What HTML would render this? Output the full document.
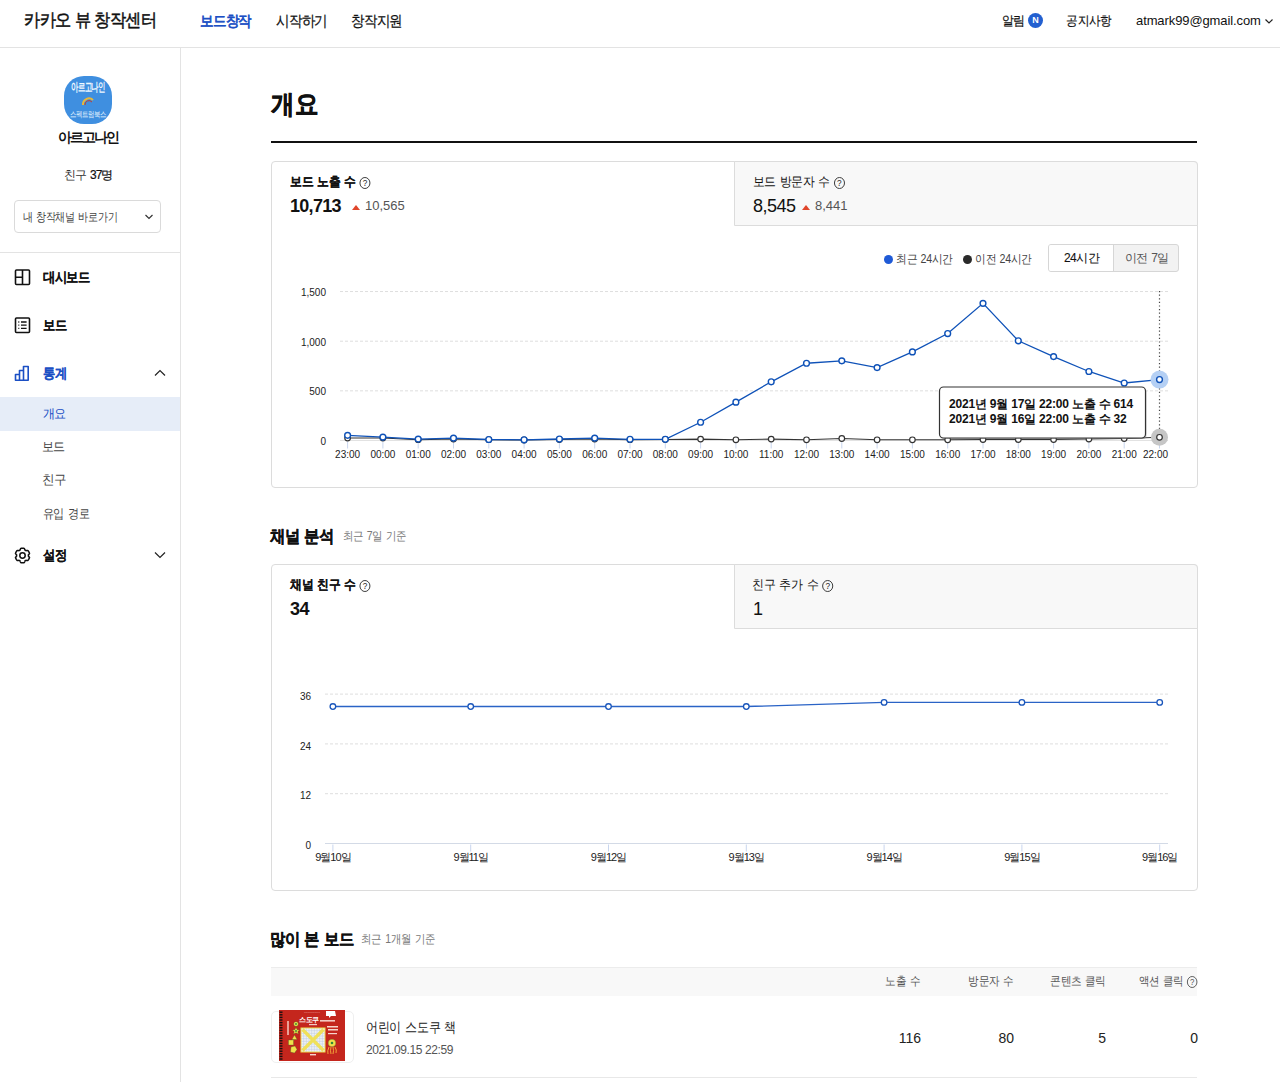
<!DOCTYPE html>
<html lang="ko"><head><meta charset="utf-8">
<style>
*{margin:0;padding:0;box-sizing:border-box}
html,body{width:1280px;height:1082px;overflow:hidden;background:#fff}
body{font-family:"Liberation Sans",sans-serif;color:#111;position:relative;word-spacing:2px}
.a{position:absolute;white-space:nowrap}
#hdr{position:absolute;left:0;top:0;width:1280px;height:48px;border-bottom:1px solid #e3e3e3;background:#fff}
#side{position:absolute;left:0;top:48px;width:181px;height:1034px;border-right:1px solid #e3e3e3}
.card{position:absolute;border:1px solid #dcdcdc;border-radius:4px;background:#fff}
.tab2{position:absolute;background:#f8f8f8;border-left:1px solid #dcdcdc;border-bottom:1px solid #dcdcdc;border-top-right-radius:4px}
.q{display:inline-block;width:12px;height:12px;border:1px solid #333;border-radius:50%;font-size:9px;line-height:10px;text-align:center;vertical-align:0px;margin-left:4px;color:#222;font-weight:normal;-webkit-text-stroke:0}
.lbl{font-size:12.5px;line-height:16px;color:#111}
.lbl b,.bk{-webkit-text-stroke:0.15px currentColor}
.tri{display:inline-block;width:0;height:0;border-left:4px solid transparent;border-right:4px solid transparent;border-bottom:5px solid #e0462b}
</style>
<style id="fit">#f_alim{transform:translateX(-0.40px) scaleX(0.9171);transform-origin:0 0}#f_notice{transform:translateX(-0.72px) scaleX(0.8904);transform-origin:0 0}#f_sel{transform:translateX(-0.40px) scaleX(0.8378);transform-origin:0 0}#f_s1{transform:translateX(-0.48px) scaleX(0.9319);transform-origin:0 0}#f_s2{transform:translateX(-1.28px) scaleX(0.9261);transform-origin:0 0}#f_s3{transform:translateX(-1.28px) scaleX(0.9682);transform-origin:0 0}#f_s4{transform:translateX(-0.48px) scaleX(0.8543);transform-origin:0 0}#f_l1{transform:translateX(0.40px) scaleX(0.9091);transform-origin:0 0}#f_l2{transform:translateX(-0.16px) scaleX(0.9120);transform-origin:0 0}#f_l3{transform:translateX(0.40px) scaleX(0.9091);transform-origin:0 0}#f_l4{transform:translateX(-0.80px) scaleX(0.9207);transform-origin:0 0}#f_lg1{transform:translateX(-0.80px) scaleX(0.8892);transform-origin:0 0}#f_lg2{transform:translateX(-0.80px) scaleX(0.8892);transform-origin:0 0}#f_sub1{transform:translateX(-0.24px) scaleX(0.8719);transform-origin:0 0}#f_sub2{transform:translateX(-0.72px) scaleX(0.8695);transform-origin:0 0}#f_h1{transform:translateX(1.04px) scaleX(0.8845);transform-origin:100% 0}#f_h2{transform:translateX(1.00px) scaleX(0.8800);transform-origin:100% 0}#f_h3{transform:translateX(1.52px) scaleX(0.8843);transform-origin:100% 0}#f_h4{transform:translateX(0.40px) scaleX(0.8725);transform-origin:100% 0}#f_t1{transform:translateX(-0.16px) scaleX(0.8589);transform-origin:0 0}</style></head><body>

<div id="hdr">
  <div class="a" style="left:24px;top:9px;font-size:18px;line-height:22px;color:#111;-webkit-text-stroke:0.5px #111;letter-spacing:-0.7px;word-spacing:0;transform:scaleX(0.9);transform-origin:0 0">카카오 뷰 창작센터</div>
  <div class="a" style="left:200px;top:11px;font-size:15px;line-height:19px;-webkit-text-stroke:0.75px currentColor;color:#1b4fc4;letter-spacing:-0.8px;transform:scaleX(0.9);transform-origin:0 0">보드창작</div>
  <div class="a" style="left:276px;top:11px;font-size:15px;line-height:19px;color:#111;-webkit-text-stroke:0.25px #111;letter-spacing:-0.8px;transform:scaleX(0.9);transform-origin:0 0">시작하기</div>
  <div class="a" style="left:351px;top:11px;font-size:15px;line-height:19px;color:#111;-webkit-text-stroke:0.25px #111;letter-spacing:-0.8px;transform:scaleX(0.9);transform-origin:0 0">창작지원</div>
  <div id="f_alim" class="a" style="left:1002px;top:12px;font-size:13px;line-height:17px;color:#111;letter-spacing:-0.3px;-webkit-text-stroke:0.2px #111">알림</div>
  <div class="a" style="left:1028px;top:13px;width:15px;height:15px;border-radius:50%;background:#2360d0;color:#fff;font-size:9px;line-height:15px;text-align:center;font-weight:bold">N</div>
  <div id="f_notice" class="a" style="left:1067px;top:12px;font-size:13px;line-height:17px;color:#111;letter-spacing:-0.3px;-webkit-text-stroke:0.2px #111">공지사항</div>
  <div class="a" style="left:1136px;top:12px;font-size:13px;line-height:17px;color:#111;letter-spacing:-0.1px">atmark99@gmail.com</div>
  <svg class="a" style="left:1264px;top:17px" width="10" height="8"><path d="M1.5 2.5 L5 6 L8.5 2.5" fill="none" stroke="#222" stroke-width="1.2"/></svg>
</div>

<div id="side">
  <div class="a" style="left:64px;top:28px;width:48px;height:48px;border-radius:20px;background:#3f8fe0;overflow:hidden">
    <div class="a" style="left:-26px;top:4px;width:100px;text-align:center;font-size:12px;line-height:14px;color:#eef8ff;font-weight:bold;letter-spacing:-0.8px;transform:scaleX(0.62);transform-origin:50px 0">아르고나인</div>
    <svg class="a" style="left:16px;top:20px" width="16" height="10"><path d="M3 9 A6 6 0 0 1 13 4" fill="none" stroke="#e8b83a" stroke-width="2"/><path d="M5 9 A4 4 0 0 1 12 6" fill="none" stroke="#c53a2a" stroke-width="1"/></svg>
    <div class="a" style="left:-26px;top:34px;width:100px;text-align:center;font-size:8px;line-height:9px;color:#e3f3ff;letter-spacing:-0.3px;transform:scaleX(0.8);transform-origin:50px 0">스펙트럼북스</div>
  </div>
  <div class="a" style="left:0;top:81px;width:176px;text-align:center;font-size:13.5px;line-height:18px;font-weight:bold;color:#111;letter-spacing:-2px">아르고나인</div>
  <div class="a" style="left:0;top:119px;width:176px;text-align:center;font-size:12px;line-height:16px;color:#333;letter-spacing:-1px">친구 <span style="color:#111;-webkit-text-stroke:0.2px #111">37명</span></div>
  <div class="a" style="left:14px;top:152px;width:147px;height:33px;border:1px solid #dadada;border-radius:4px">
    <div id="f_sel" class="a" style="left:8px;top:8px;font-size:12px;line-height:16px;color:#444;letter-spacing:-0.3px;word-spacing:1px">내 창작채널 바로가기</div>
    <svg class="a" style="left:129px;top:12px" width="10" height="8"><path d="M1.5 2 L5 5.5 L8.5 2" fill="none" stroke="#333" stroke-width="1.2"/></svg>
  </div>
  <div class="a" style="left:0;top:204px;width:180px;height:1px;background:#e3e3e3"></div>

  <!-- dashboard -->
  <svg class="a" style="left:14px;top:221px" width="17" height="17"><rect x="1.5" y="1" width="14" height="14.5" rx="1" fill="none" stroke="#111" stroke-width="1.6"/><path d="M8.5 1 V15.5 M1.5 8.3 H8.5" stroke="#111" stroke-width="1.6"/></svg>
  <div class="a" style="left:43px;top:220px;font-size:14px;line-height:18px;font-weight:bold;-webkit-text-stroke:0.05px currentColor;color:#111;letter-spacing:-0.9px;transform:scaleX(0.88);transform-origin:0 0">대시보드</div>
  <!-- board -->
  <svg class="a" style="left:14px;top:269px" width="17" height="17"><rect x="1.5" y="1" width="14" height="14.5" rx="1" fill="none" stroke="#111" stroke-width="1.6"/><path d="M4.3 5 H5.3 M7 5 H12.6 M4.3 8.2 H5.3 M7 8.2 H12.6 M4.3 11.4 H5.3 M7 11.4 H12.6" stroke="#111" stroke-width="1.3"/></svg>
  <div class="a" style="left:43px;top:268px;font-size:14px;line-height:18px;font-weight:bold;-webkit-text-stroke:0.05px currentColor;color:#111;letter-spacing:-0.9px;transform:scaleX(0.88);transform-origin:0 0">보드</div>
  <!-- stats -->
  <svg class="a" style="left:14px;top:317px" width="17" height="17"><path d="M1.5 15.2 V9.5 H5.5 V15.2 Z M5.5 15.2 V5.5 H9.5 V15.2 Z M9.5 15.2 V1.5 H14.2 V15.2 Z" fill="none" stroke="#1b4fc4" stroke-width="1.6" stroke-linejoin="round"/></svg>
  <div class="a" style="left:43px;top:316px;font-size:14px;line-height:18px;font-weight:bold;-webkit-text-stroke:0.05px currentColor;color:#1b4fc4;letter-spacing:-0.9px;transform:scaleX(0.88);transform-origin:0 0">통계</div>
  <svg class="a" style="left:153px;top:320px" width="14" height="10"><path d="M2 7.5 L7 2.5 L12 7.5" fill="none" stroke="#222" stroke-width="1.2"/></svg>
  <div class="a" style="left:0;top:349px;width:180px;height:34px;background:#e6edf8"></div>
  <div id="f_s1" class="a" style="left:43px;top:357px;font-size:13px;line-height:17px;color:#1b4fc4;letter-spacing:-0.3px">개요</div>
  <div id="f_s2" class="a" style="left:43px;top:390px;font-size:13px;line-height:17px;color:#444;letter-spacing:-0.3px">보드</div>
  <div id="f_s3" class="a" style="left:43px;top:423px;font-size:13px;line-height:17px;color:#444;letter-spacing:-0.3px">친구</div>
  <div id="f_s4" class="a" style="left:43px;top:457px;font-size:13px;line-height:17px;color:#444;letter-spacing:-0.3px;word-spacing:1px">유입 경로</div>
  <!-- settings -->
  <svg class="a" style="left:13px;top:498px" width="19" height="19"><polygon points="9.50,2.20 9.63,2.20 9.75,2.20 9.88,2.21 10.01,2.22 10.14,2.23 10.26,2.24 10.39,2.25 10.52,2.27 10.64,2.29 10.77,2.31 10.89,2.33 11.02,2.36 11.14,2.39 11.27,2.42 11.35,2.58 11.43,2.75 11.51,2.92 11.58,3.09 11.65,3.26 11.71,3.43 11.76,3.60 11.82,3.77 11.86,3.94 11.90,4.11 11.99,4.15 12.09,4.20 12.18,4.24 12.27,4.29 12.36,4.34 12.45,4.39 12.54,4.44 12.63,4.50 12.71,4.55 12.80,4.61 12.88,4.67 12.97,4.73 13.13,4.68 13.30,4.63 13.48,4.59 13.65,4.55 13.83,4.52 14.01,4.49 14.19,4.47 14.38,4.45 14.56,4.44 14.75,4.43 14.84,4.52 14.92,4.62 15.01,4.71 15.09,4.81 15.17,4.91 15.25,5.01 15.33,5.11 15.41,5.21 15.48,5.31 15.55,5.42 15.62,5.52 15.69,5.63 15.76,5.74 15.82,5.85 15.88,5.96 15.95,6.07 16.00,6.19 16.06,6.30 16.12,6.41 16.17,6.53 16.22,6.65 16.27,6.77 16.32,6.88 16.36,7.00 16.40,7.12 16.44,7.24 16.48,7.37 16.52,7.49 16.42,7.65 16.31,7.80 16.20,7.95 16.09,8.10 15.98,8.24 15.86,8.38 15.74,8.51 15.62,8.64 15.49,8.76 15.37,8.88 15.38,8.99 15.39,9.09 15.39,9.19 15.40,9.29 15.40,9.40 15.40,9.50 15.40,9.60 15.40,9.71 15.39,9.81 15.39,9.91 15.38,10.01 15.37,10.12 15.49,10.24 15.62,10.36 15.74,10.49 15.86,10.62 15.98,10.76 16.09,10.90 16.20,11.05 16.31,11.20 16.42,11.35 16.52,11.51 16.48,11.63 16.44,11.76 16.40,11.88 16.36,12.00 16.32,12.12 16.27,12.23 16.22,12.35 16.17,12.47 16.12,12.59 16.06,12.70 16.00,12.81 15.95,12.93 15.88,13.04 15.82,13.15 15.76,13.26 15.69,13.37 15.62,13.48 15.55,13.58 15.48,13.69 15.41,13.79 15.33,13.89 15.25,13.99 15.17,14.09 15.09,14.19 15.01,14.29 14.92,14.38 14.84,14.48 14.75,14.57 14.56,14.56 14.38,14.55 14.19,14.53 14.01,14.51 13.83,14.48 13.65,14.45 13.48,14.41 13.30,14.37 13.13,14.32 12.97,14.27 12.88,14.33 12.80,14.39 12.71,14.45 12.63,14.50 12.54,14.56 12.45,14.61 12.36,14.66 12.27,14.71 12.18,14.76 12.09,14.80 11.99,14.85 11.90,14.89 11.86,15.06 11.82,15.23 11.76,15.40 11.71,15.57 11.65,15.74 11.58,15.91 11.51,16.08 11.43,16.25 11.35,16.42 11.27,16.58 11.14,16.61 11.02,16.64 10.89,16.67 10.77,16.69 10.64,16.71 10.52,16.73 10.39,16.75 10.26,16.76 10.14,16.77 10.01,16.78 9.88,16.79 9.75,16.80 9.63,16.80 9.50,16.80 9.37,16.80 9.25,16.80 9.12,16.79 8.99,16.78 8.86,16.77 8.74,16.76 8.61,16.75 8.48,16.73 8.36,16.71 8.23,16.69 8.11,16.67 7.98,16.64 7.86,16.61 7.73,16.58 7.65,16.42 7.57,16.25 7.49,16.08 7.42,15.91 7.35,15.74 7.29,15.57 7.24,15.40 7.18,15.23 7.14,15.06 7.10,14.89 7.01,14.85 6.91,14.80 6.82,14.76 6.73,14.71 6.64,14.66 6.55,14.61 6.46,14.56 6.37,14.50 6.29,14.45 6.20,14.39 6.12,14.33 6.03,14.27 5.87,14.32 5.70,14.37 5.52,14.41 5.35,14.45 5.17,14.48 4.99,14.51 4.81,14.53 4.62,14.55 4.44,14.56 4.25,14.57 4.16,14.48 4.08,14.38 3.99,14.29 3.91,14.19 3.83,14.09 3.75,13.99 3.67,13.89 3.59,13.79 3.52,13.69 3.45,13.58 3.38,13.48 3.31,13.37 3.24,13.26 3.18,13.15 3.12,13.04 3.05,12.93 3.00,12.81 2.94,12.70 2.88,12.59 2.83,12.47 2.78,12.35 2.73,12.23 2.68,12.12 2.64,12.00 2.60,11.88 2.56,11.76 2.52,11.63 2.48,11.51 2.58,11.35 2.69,11.20 2.80,11.05 2.91,10.90 3.02,10.76 3.14,10.62 3.26,10.49 3.38,10.36 3.51,10.24 3.63,10.12 3.62,10.01 3.61,9.91 3.61,9.81 3.60,9.71 3.60,9.60 3.60,9.50 3.60,9.40 3.60,9.29 3.61,9.19 3.61,9.09 3.62,8.99 3.63,8.88 3.51,8.76 3.38,8.64 3.26,8.51 3.14,8.38 3.02,8.24 2.91,8.10 2.80,7.95 2.69,7.80 2.58,7.65 2.48,7.49 2.52,7.37 2.56,7.24 2.60,7.12 2.64,7.00 2.68,6.88 2.73,6.77 2.78,6.65 2.83,6.53 2.88,6.41 2.94,6.30 3.00,6.19 3.05,6.07 3.12,5.96 3.18,5.85 3.24,5.74 3.31,5.63 3.38,5.52 3.45,5.42 3.52,5.31 3.59,5.21 3.67,5.11 3.75,5.01 3.83,4.91 3.91,4.81 3.99,4.71 4.08,4.62 4.16,4.52 4.25,4.43 4.44,4.44 4.62,4.45 4.81,4.47 4.99,4.49 5.17,4.52 5.35,4.55 5.52,4.59 5.70,4.63 5.87,4.68 6.03,4.73 6.12,4.67 6.20,4.61 6.29,4.55 6.37,4.50 6.46,4.44 6.55,4.39 6.64,4.34 6.73,4.29 6.82,4.24 6.91,4.20 7.01,4.15 7.10,4.11 7.14,3.94 7.18,3.77 7.24,3.60 7.29,3.43 7.35,3.26 7.42,3.09 7.49,2.92 7.57,2.75 7.65,2.58 7.73,2.42 7.86,2.39 7.98,2.36 8.11,2.33 8.23,2.31 8.36,2.29 8.48,2.27 8.61,2.25 8.74,2.24 8.86,2.23 8.99,2.22 9.12,2.21 9.25,2.20 9.37,2.20" fill="none" stroke="#111" stroke-width="1.5" stroke-linejoin="round"/><circle cx="9.5" cy="9.5" r="2.7" fill="none" stroke="#111" stroke-width="1.5"/></svg>
  <div class="a" style="left:43px;top:498px;font-size:14px;line-height:18px;font-weight:bold;-webkit-text-stroke:0.05px currentColor;color:#111;letter-spacing:-0.9px;transform:scaleX(0.88);transform-origin:0 0">설정</div>
  <svg class="a" style="left:153px;top:502px" width="14" height="10"><path d="M2 2.5 L7 7.5 L12 2.5" fill="none" stroke="#222" stroke-width="1.2"/></svg>
</div>

<div id="main">
  <div class="a" style="left:271px;top:88px;font-size:26px;line-height:32px;font-weight:bold;-webkit-text-stroke:0.6px currentColor;color:#111;letter-spacing:0.5px;transform:scaleX(0.9);transform-origin:0 0">개요</div>
  <div class="a" style="left:271px;top:141px;width:926px;height:2px;background:#111"></div>

  <!-- card 1 -->
  <div class="card" style="left:271px;top:161px;width:927px;height:327px">
    <div class="tab2" style="left:462px;top:-1px;width:464px;height:65px;border-top:1px solid #dcdcdc;border-right:1px solid #dcdcdc"></div>
  </div>
  <div id="f_l1" class="a lbl" style="left:290px;top:174px;font-weight:bold;letter-spacing:-0.3px;word-spacing:1px"><span class="bk">보드 노출 수</span><span class="q">?</span></div>
  <div class="a" style="left:290px;top:196px;font-size:18px;line-height:21px;font-weight:bold;color:#111;letter-spacing:-0.7px">10,713</div>
  <div class="a tri" style="left:352px;top:205px"></div>
  <div class="a" style="left:365px;top:198px;font-size:13px;line-height:16px;color:#555">10,565</div>

  <div id="f_l2" class="a lbl" style="left:753px;top:174px;letter-spacing:-0.3px;word-spacing:1px">보드 방문자 수<span class="q">?</span></div>
  <div class="a" style="left:753px;top:196px;font-size:18px;line-height:21px;color:#111;letter-spacing:-0.5px">8,545</div>
  <div class="a tri" style="left:802px;top:205px"></div>
  <div class="a" style="left:815px;top:198px;font-size:13px;line-height:16px;color:#555">8,441</div>

  <!-- legend -->
  <div class="a" style="left:884px;top:255px;width:9px;height:9px;border-radius:50%;background:#1f5ad6"></div>
  <div id="f_lg1" class="a" style="left:897px;top:251px;font-size:12px;line-height:16px;color:#444;letter-spacing:-0.3px;word-spacing:1px">최근 24시간</div>
  <div class="a" style="left:963px;top:255px;width:9px;height:9px;border-radius:50%;background:#2a2a2a"></div>
  <div id="f_lg2" class="a" style="left:976px;top:251px;font-size:12px;line-height:16px;color:#444;letter-spacing:-0.3px;word-spacing:1px">이전 24시간</div>
  <!-- toggle -->
  <div class="a" style="left:1048px;top:244px;width:131px;height:28px;border:1px solid #d6d6d6;border-radius:3px;background:#f2f2f2;overflow:hidden">
    <div class="a" style="left:0;top:0;width:65px;height:26px;background:#fff;border-right:1px solid #d6d6d6"></div>
    <div class="a" style="left:0;top:5px;width:65px;text-align:center;font-size:12px;line-height:16px;color:#111;letter-spacing:-0.6px;-webkit-text-stroke:0.1px #111">24시간</div>
    <div class="a" style="left:65px;top:5px;width:65px;text-align:center;font-size:12px;line-height:16px;color:#555;letter-spacing:-1px">이전 7일</div>
  </div>

  <!-- card 2 -->
  <div class="a" style="left:270px;top:526px;font-size:17px;line-height:21px;font-weight:bold;-webkit-text-stroke:0.35px currentColor;color:#111;letter-spacing:-0.8px;word-spacing:2px;transform:scaleX(0.9);transform-origin:0 0">채널 분석</div>
  <div id="f_sub1" class="a" style="left:343px;top:528px;font-size:12px;line-height:16px;color:#777;letter-spacing:-0.3px;word-spacing:1px">최근 7일 기준</div>
  <div class="card" style="left:271px;top:564px;width:927px;height:327px">
    <div class="tab2" style="left:462px;top:-1px;width:464px;height:65px;border-top:1px solid #dcdcdc;border-right:1px solid #dcdcdc"></div>
  </div>
  <div id="f_l3" class="a lbl" style="left:290px;top:577px;font-weight:bold;letter-spacing:-0.3px;word-spacing:1px"><span class="bk">채널 친구 수</span><span class="q">?</span></div>
  <div class="a" style="left:290px;top:599px;font-size:18px;line-height:21px;font-weight:bold;color:#111;letter-spacing:-0.5px">34</div>
  <div id="f_l4" class="a lbl" style="left:753px;top:577px;letter-spacing:-0.3px;word-spacing:1px">친구 추가 수<span class="q">?</span></div>
  <div class="a" style="left:753px;top:599px;font-size:18px;line-height:21px;color:#111">1</div>

  <!-- table -->
  <div class="a" style="left:270px;top:929px;font-size:17px;line-height:21px;font-weight:bold;-webkit-text-stroke:0.35px currentColor;color:#111;letter-spacing:-0.8px;word-spacing:2px;transform:scaleX(0.9);transform-origin:0 0">많이 본 보드</div>
  <div id="f_sub2" class="a" style="left:362px;top:931px;font-size:12px;line-height:16px;color:#777;letter-spacing:-0.3px;word-spacing:1px">최근 1개월 기준</div>
  <div class="a" style="left:271px;top:967px;width:926px;height:29px;background:#f8f8f8;border-top:1px solid #ececec"></div>
  <div id="f_h1" class="a" style="left:819px;top:973px;width:100px;text-align:right;font-size:12px;line-height:16px;color:#555;letter-spacing:-0.3px;word-spacing:1px">노출 수</div>
  <div id="f_h2" class="a" style="left:912px;top:973px;width:100px;text-align:right;font-size:12px;line-height:16px;color:#555;letter-spacing:-0.3px;word-spacing:1px">방문자 수</div>
  <div id="f_h3" class="a" style="left:1004px;top:973px;width:100px;text-align:right;font-size:12px;line-height:16px;color:#555;letter-spacing:-0.3px;word-spacing:1px">콘텐츠 클릭</div>
  <div id="f_h4" class="a" style="left:1097px;top:973px;width:100px;text-align:right;font-size:12px;line-height:16px;color:#555;letter-spacing:-0.3px;word-spacing:1px">액션 클릭<span class="q" style="border-color:#555;color:#555">?</span></div>
  <div class="a" style="left:271px;top:1011px;width:83px;height:52px;border:1px solid #efefef;border-radius:5px"></div>
  <svg class="a" style="left:279px;top:1010px" width="66" height="51" viewBox="0 0 66 51">
    <rect x="0" y="0" width="66" height="51" fill="#c4261d"/>
    <g fill="#1a1010"><rect x="0.5" y="1.5" width="3" height="1.4"/><rect x="0.5" y="4.1" width="3" height="1.4"/><rect x="0.5" y="6.7" width="3" height="1.4"/><rect x="0.5" y="9.3" width="3" height="1.4"/><rect x="0.5" y="11.9" width="3" height="1.4"/><rect x="0.5" y="14.5" width="3" height="1.4"/><rect x="0.5" y="17.1" width="3" height="1.4"/><rect x="0.5" y="19.7" width="3" height="1.4"/><rect x="0.5" y="22.3" width="3" height="1.4"/><rect x="0.5" y="24.9" width="3" height="1.4"/><rect x="0.5" y="27.5" width="3" height="1.4"/><rect x="0.5" y="30.1" width="3" height="1.4"/><rect x="0.5" y="32.7" width="3" height="1.4"/><rect x="0.5" y="35.3" width="3" height="1.4"/><rect x="0.5" y="37.9" width="3" height="1.4"/><rect x="0.5" y="40.5" width="3" height="1.4"/><rect x="0.5" y="43.1" width="3" height="1.4"/><rect x="0.5" y="45.7" width="3" height="1.4"/><rect x="0.5" y="48.3" width="3" height="1.4"/></g>
    <text x="33" y="3.5" font-size="3" fill="#f6d9d0" text-anchor="middle" font-family="Liberation Sans, sans-serif">~~~~~~~~~</text>
    
    <text x="30" y="12" font-size="7" font-weight="bold" fill="#fff" text-anchor="middle" letter-spacing="-0.6" font-family="Liberation Sans, sans-serif">스도쿠</text>
    <path d="M47 1 H56 L57 6 L52 6 L50 8 L50 6 L47 6 Z" fill="#fff"/>
    <rect x="41" y="10" width="15" height="1.6" fill="#f3c9c2"/>
    <rect x="30" y="14" width="8" height="1.2" fill="#f3c9c2"/>
    <rect x="22" y="18" width="24" height="24" fill="#eef2f7" stroke="#f0de48" stroke-width="1"/>
    <g stroke="#b7c6dc" stroke-width="0.4"><line x1="24.67" y1="18" x2="24.67" y2="42"/><line x1="22" y1="20.67" x2="46" y2="20.67"/><line x1="27.33" y1="18" x2="27.33" y2="42"/><line x1="22" y1="23.33" x2="46" y2="23.33"/><line x1="30.00" y1="18" x2="30.00" y2="42"/><line x1="22" y1="26.00" x2="46" y2="26.00"/><line x1="32.67" y1="18" x2="32.67" y2="42"/><line x1="22" y1="28.67" x2="46" y2="28.67"/><line x1="35.33" y1="18" x2="35.33" y2="42"/><line x1="22" y1="31.33" x2="46" y2="31.33"/><line x1="38.00" y1="18" x2="38.00" y2="42"/><line x1="22" y1="34.00" x2="46" y2="34.00"/><line x1="40.67" y1="18" x2="40.67" y2="42"/><line x1="22" y1="36.67" x2="46" y2="36.67"/><line x1="43.33" y1="18" x2="43.33" y2="42"/><line x1="22" y1="39.33" x2="46" y2="39.33"/></g>
    <path d="M23.5 19.5 L44.5 40.5 M44.5 19.5 L23.5 40.5" stroke="#f2e14a" stroke-width="3.2" opacity="0.9"/>
    <g fill="#f2e14a" stroke="#2d6a2d" stroke-width="0.3">
      <circle cx="17" cy="14" r="2.3"/>
      <path d="M17 17.5 L18.2 19.8 L20.6 20 L18.8 21.6 L19.4 24 L17 22.7 L14.6 24 L15.2 21.6 L13.4 20 L15.8 19.8 Z"/>
      <path d="M15.5 25 L18 29.5 L13 29.5 Z"/>
      <rect x="9.5" y="30" width="5" height="5"/>
      <path d="M12 37 L16 36 L18 39.5 L15.5 43 L11.5 42 Z"/>
      <circle cx="53" cy="33" r="3.8"/>
    </g>
    <g fill="#2d8a3a"><circle cx="17" cy="14" r="0.9"/><circle cx="17" cy="21" r="0.9"/><circle cx="53" cy="33" r="1.3"/></g>
    <path d="M50 37 Q48 41 49 44 M52 37 Q51 41 52 44 M54 37 Q55 41 54 44 M56 37 Q58 40 57 43" stroke="#f2a33a" stroke-width="1" fill="none"/>
    <g fill="#f6d5cc">
      <rect x="8" y="11" width="2" height="14" opacity="0.7"/>
      <rect x="48" y="16" width="11" height="1.5"/><rect x="49" y="19" width="10" height="1.5"/><rect x="49" y="23" width="9" height="1.2"/>
      <rect x="31" y="44" width="6" height="1.4"/>
    </g>
  </svg>
  <div id="f_t1" class="a" style="left:366px;top:1018px;font-size:14px;line-height:18px;color:#222;letter-spacing:-0.3px;word-spacing:1px">어린이 스도쿠 책</div>
  <div class="a" style="left:366px;top:1042px;font-size:12px;line-height:16px;color:#555;letter-spacing:-0.4px;word-spacing:0">2021.09.15 22:59</div>
  <div class="a" style="left:821px;top:1029px;width:100px;text-align:right;font-size:14px;line-height:18px;color:#222">116</div>
  <div class="a" style="left:914px;top:1029px;width:100px;text-align:right;font-size:14px;line-height:18px;color:#222">80</div>
  <div class="a" style="left:1006px;top:1029px;width:100px;text-align:right;font-size:14px;line-height:18px;color:#222">5</div>
  <div class="a" style="left:1098px;top:1029px;width:100px;text-align:right;font-size:14px;line-height:18px;color:#222">0</div>
  <div class="a" style="left:271px;top:1077px;width:926px;height:1px;background:#e8e8e8"></div>
</div>
<svg id="charts" class="a" style="left:0;top:0;word-spacing:0" width="1280" height="1082"><line x1="340" y1="291.55" x2="1168" y2="291.55" stroke="#dedede" stroke-width="1" stroke-dasharray="3 2"/><line x1="340" y1="341.2" x2="1168" y2="341.2" stroke="#dedede" stroke-width="1" stroke-dasharray="3 2"/><line x1="340" y1="390.85" x2="1168" y2="390.85" stroke="#dedede" stroke-width="1" stroke-dasharray="3 2"/><line x1="340" y1="440.5" x2="1168" y2="440.5" stroke="#e2e2e2" stroke-width="1"/><text x="326" y="296.15000000000003" text-anchor="end" font-size="10" fill="#222" font-family="Liberation Sans, sans-serif">1,500</text><text x="326" y="345.8" text-anchor="end" font-size="10" fill="#222" font-family="Liberation Sans, sans-serif">1,000</text><text x="326" y="395.45000000000005" text-anchor="end" font-size="10" fill="#222" font-family="Liberation Sans, sans-serif">500</text><text x="326" y="445.1" text-anchor="end" font-size="10" fill="#222" font-family="Liberation Sans, sans-serif">0</text><line x1="347.6" y1="441.5" x2="347.6" y2="448.5" stroke="#c9d6ee" stroke-width="1"/><text x="347.60" y="457.5" text-anchor="middle" font-size="10" fill="#222" font-family="Liberation Sans, sans-serif">23:00</text><line x1="382.90000000000003" y1="441.5" x2="382.90000000000003" y2="448.5" stroke="#c9d6ee" stroke-width="1"/><text x="382.90" y="457.5" text-anchor="middle" font-size="10" fill="#222" font-family="Liberation Sans, sans-serif">00:00</text><line x1="418.20000000000005" y1="441.5" x2="418.20000000000005" y2="448.5" stroke="#c9d6ee" stroke-width="1"/><text x="418.20" y="457.5" text-anchor="middle" font-size="10" fill="#222" font-family="Liberation Sans, sans-serif">01:00</text><line x1="453.5" y1="441.5" x2="453.5" y2="448.5" stroke="#c9d6ee" stroke-width="1"/><text x="453.50" y="457.5" text-anchor="middle" font-size="10" fill="#222" font-family="Liberation Sans, sans-serif">02:00</text><line x1="488.8" y1="441.5" x2="488.8" y2="448.5" stroke="#c9d6ee" stroke-width="1"/><text x="488.80" y="457.5" text-anchor="middle" font-size="10" fill="#222" font-family="Liberation Sans, sans-serif">03:00</text><line x1="524.1" y1="441.5" x2="524.1" y2="448.5" stroke="#c9d6ee" stroke-width="1"/><text x="524.10" y="457.5" text-anchor="middle" font-size="10" fill="#222" font-family="Liberation Sans, sans-serif">04:00</text><line x1="559.4" y1="441.5" x2="559.4" y2="448.5" stroke="#c9d6ee" stroke-width="1"/><text x="559.40" y="457.5" text-anchor="middle" font-size="10" fill="#222" font-family="Liberation Sans, sans-serif">05:00</text><line x1="594.7" y1="441.5" x2="594.7" y2="448.5" stroke="#c9d6ee" stroke-width="1"/><text x="594.70" y="457.5" text-anchor="middle" font-size="10" fill="#222" font-family="Liberation Sans, sans-serif">06:00</text><line x1="630.0" y1="441.5" x2="630.0" y2="448.5" stroke="#c9d6ee" stroke-width="1"/><text x="630.00" y="457.5" text-anchor="middle" font-size="10" fill="#222" font-family="Liberation Sans, sans-serif">07:00</text><line x1="665.3" y1="441.5" x2="665.3" y2="448.5" stroke="#c9d6ee" stroke-width="1"/><text x="665.30" y="457.5" text-anchor="middle" font-size="10" fill="#222" font-family="Liberation Sans, sans-serif">08:00</text><line x1="700.6" y1="441.5" x2="700.6" y2="448.5" stroke="#c9d6ee" stroke-width="1"/><text x="700.60" y="457.5" text-anchor="middle" font-size="10" fill="#222" font-family="Liberation Sans, sans-serif">09:00</text><line x1="735.9" y1="441.5" x2="735.9" y2="448.5" stroke="#c9d6ee" stroke-width="1"/><text x="735.90" y="457.5" text-anchor="middle" font-size="10" fill="#222" font-family="Liberation Sans, sans-serif">10:00</text><line x1="771.2" y1="441.5" x2="771.2" y2="448.5" stroke="#c9d6ee" stroke-width="1"/><text x="771.20" y="457.5" text-anchor="middle" font-size="10" fill="#222" font-family="Liberation Sans, sans-serif">11:00</text><line x1="806.5" y1="441.5" x2="806.5" y2="448.5" stroke="#c9d6ee" stroke-width="1"/><text x="806.50" y="457.5" text-anchor="middle" font-size="10" fill="#222" font-family="Liberation Sans, sans-serif">12:00</text><line x1="841.8" y1="441.5" x2="841.8" y2="448.5" stroke="#c9d6ee" stroke-width="1"/><text x="841.80" y="457.5" text-anchor="middle" font-size="10" fill="#222" font-family="Liberation Sans, sans-serif">13:00</text><line x1="877.1" y1="441.5" x2="877.1" y2="448.5" stroke="#c9d6ee" stroke-width="1"/><text x="877.10" y="457.5" text-anchor="middle" font-size="10" fill="#222" font-family="Liberation Sans, sans-serif">14:00</text><line x1="912.4" y1="441.5" x2="912.4" y2="448.5" stroke="#c9d6ee" stroke-width="1"/><text x="912.40" y="457.5" text-anchor="middle" font-size="10" fill="#222" font-family="Liberation Sans, sans-serif">15:00</text><line x1="947.6999999999999" y1="441.5" x2="947.6999999999999" y2="448.5" stroke="#c9d6ee" stroke-width="1"/><text x="947.70" y="457.5" text-anchor="middle" font-size="10" fill="#222" font-family="Liberation Sans, sans-serif">16:00</text><line x1="983.0" y1="441.5" x2="983.0" y2="448.5" stroke="#c9d6ee" stroke-width="1"/><text x="983.00" y="457.5" text-anchor="middle" font-size="10" fill="#222" font-family="Liberation Sans, sans-serif">17:00</text><line x1="1018.3" y1="441.5" x2="1018.3" y2="448.5" stroke="#c9d6ee" stroke-width="1"/><text x="1018.30" y="457.5" text-anchor="middle" font-size="10" fill="#222" font-family="Liberation Sans, sans-serif">18:00</text><line x1="1053.6" y1="441.5" x2="1053.6" y2="448.5" stroke="#c9d6ee" stroke-width="1"/><text x="1053.60" y="457.5" text-anchor="middle" font-size="10" fill="#222" font-family="Liberation Sans, sans-serif">19:00</text><line x1="1088.9" y1="441.5" x2="1088.9" y2="448.5" stroke="#c9d6ee" stroke-width="1"/><text x="1088.90" y="457.5" text-anchor="middle" font-size="10" fill="#222" font-family="Liberation Sans, sans-serif">20:00</text><line x1="1124.1999999999998" y1="441.5" x2="1124.1999999999998" y2="448.5" stroke="#c9d6ee" stroke-width="1"/><text x="1124.20" y="457.5" text-anchor="middle" font-size="10" fill="#222" font-family="Liberation Sans, sans-serif">21:00</text><line x1="1159.5" y1="441.5" x2="1159.5" y2="448.5" stroke="#c9d6ee" stroke-width="1"/><text x="1155.50" y="457.5" text-anchor="middle" font-size="10" fill="#222" font-family="Liberation Sans, sans-serif">22:00</text><line x1="1159.5" y1="291" x2="1159.5" y2="437.5" stroke="#444" stroke-width="1.2" stroke-dasharray="1.2 2.4"/><polyline points="347.60,438.02 382.90,438.02 418.20,439.71 453.50,439.01 488.80,439.71 524.10,440.00 559.40,439.51 594.70,439.01 630.00,439.71 665.30,439.51 700.60,439.11 735.90,439.80 771.20,439.11 806.50,439.80 841.80,438.51 877.10,439.80 912.40,439.80 947.70,439.80 983.00,439.51 1018.30,439.51 1053.60,439.51 1088.90,439.01 1124.20,438.51 1159.50,437.32" fill="none" stroke="#333" stroke-width="1.1"/><circle cx="347.60" cy="438.02" r="2.8" fill="#fff" stroke="#333" stroke-width="1.2"/><circle cx="382.90" cy="438.02" r="2.8" fill="#fff" stroke="#333" stroke-width="1.2"/><circle cx="418.20" cy="439.71" r="2.8" fill="#fff" stroke="#333" stroke-width="1.2"/><circle cx="453.50" cy="439.01" r="2.8" fill="#fff" stroke="#333" stroke-width="1.2"/><circle cx="488.80" cy="439.71" r="2.8" fill="#fff" stroke="#333" stroke-width="1.2"/><circle cx="524.10" cy="440.00" r="2.8" fill="#fff" stroke="#333" stroke-width="1.2"/><circle cx="559.40" cy="439.51" r="2.8" fill="#fff" stroke="#333" stroke-width="1.2"/><circle cx="594.70" cy="439.01" r="2.8" fill="#fff" stroke="#333" stroke-width="1.2"/><circle cx="630.00" cy="439.71" r="2.8" fill="#fff" stroke="#333" stroke-width="1.2"/><circle cx="665.30" cy="439.51" r="2.8" fill="#fff" stroke="#333" stroke-width="1.2"/><circle cx="700.60" cy="439.11" r="2.8" fill="#fff" stroke="#333" stroke-width="1.2"/><circle cx="735.90" cy="439.80" r="2.8" fill="#fff" stroke="#333" stroke-width="1.2"/><circle cx="771.20" cy="439.11" r="2.8" fill="#fff" stroke="#333" stroke-width="1.2"/><circle cx="806.50" cy="439.80" r="2.8" fill="#fff" stroke="#333" stroke-width="1.2"/><circle cx="841.80" cy="438.51" r="2.8" fill="#fff" stroke="#333" stroke-width="1.2"/><circle cx="877.10" cy="439.80" r="2.8" fill="#fff" stroke="#333" stroke-width="1.2"/><circle cx="912.40" cy="439.80" r="2.8" fill="#fff" stroke="#333" stroke-width="1.2"/><circle cx="947.70" cy="439.80" r="2.8" fill="#fff" stroke="#333" stroke-width="1.2"/><circle cx="983.00" cy="439.51" r="2.8" fill="#fff" stroke="#333" stroke-width="1.2"/><circle cx="1018.30" cy="439.51" r="2.8" fill="#fff" stroke="#333" stroke-width="1.2"/><circle cx="1053.60" cy="439.51" r="2.8" fill="#fff" stroke="#333" stroke-width="1.2"/><circle cx="1088.90" cy="439.01" r="2.8" fill="#fff" stroke="#333" stroke-width="1.2"/><circle cx="1124.20" cy="438.51" r="2.8" fill="#fff" stroke="#333" stroke-width="1.2"/><circle cx="1159.50" cy="437.32" r="2.8" fill="#fff" stroke="#333" stroke-width="1.2"/><polyline points="347.60,435.34 382.90,437.12 418.20,439.11 453.50,438.12 488.80,439.51 524.10,439.80 559.40,439.01 594.70,438.12 630.00,439.31 665.30,439.31 700.60,422.23 735.90,402.17 771.20,381.81 806.50,363.24 841.80,360.86 877.10,367.61 912.40,351.92 947.70,333.55 983.00,303.37 1018.30,340.80 1053.60,356.59 1088.90,371.49 1124.20,383.01 1159.50,379.53" fill="none" stroke="#0f52b8" stroke-width="1.3"/><circle cx="1159.50" cy="379.53" r="9" fill="#b5d0f4"/><circle cx="1159.50" cy="437.32" r="8.5" fill="#c6c6c6"/><circle cx="347.60" cy="435.34" r="2.9" fill="#fff" stroke="#0f52b8" stroke-width="1.4"/><circle cx="382.90" cy="437.12" r="2.9" fill="#fff" stroke="#0f52b8" stroke-width="1.4"/><circle cx="418.20" cy="439.11" r="2.9" fill="#fff" stroke="#0f52b8" stroke-width="1.4"/><circle cx="453.50" cy="438.12" r="2.9" fill="#fff" stroke="#0f52b8" stroke-width="1.4"/><circle cx="488.80" cy="439.51" r="2.9" fill="#fff" stroke="#0f52b8" stroke-width="1.4"/><circle cx="524.10" cy="439.80" r="2.9" fill="#fff" stroke="#0f52b8" stroke-width="1.4"/><circle cx="559.40" cy="439.01" r="2.9" fill="#fff" stroke="#0f52b8" stroke-width="1.4"/><circle cx="594.70" cy="438.12" r="2.9" fill="#fff" stroke="#0f52b8" stroke-width="1.4"/><circle cx="630.00" cy="439.31" r="2.9" fill="#fff" stroke="#0f52b8" stroke-width="1.4"/><circle cx="665.30" cy="439.31" r="2.9" fill="#fff" stroke="#0f52b8" stroke-width="1.4"/><circle cx="700.60" cy="422.23" r="2.9" fill="#fff" stroke="#0f52b8" stroke-width="1.4"/><circle cx="735.90" cy="402.17" r="2.9" fill="#fff" stroke="#0f52b8" stroke-width="1.4"/><circle cx="771.20" cy="381.81" r="2.9" fill="#fff" stroke="#0f52b8" stroke-width="1.4"/><circle cx="806.50" cy="363.24" r="2.9" fill="#fff" stroke="#0f52b8" stroke-width="1.4"/><circle cx="841.80" cy="360.86" r="2.9" fill="#fff" stroke="#0f52b8" stroke-width="1.4"/><circle cx="877.10" cy="367.61" r="2.9" fill="#fff" stroke="#0f52b8" stroke-width="1.4"/><circle cx="912.40" cy="351.92" r="2.9" fill="#fff" stroke="#0f52b8" stroke-width="1.4"/><circle cx="947.70" cy="333.55" r="2.9" fill="#fff" stroke="#0f52b8" stroke-width="1.4"/><circle cx="983.00" cy="303.37" r="2.9" fill="#fff" stroke="#0f52b8" stroke-width="1.4"/><circle cx="1018.30" cy="340.80" r="2.9" fill="#fff" stroke="#0f52b8" stroke-width="1.4"/><circle cx="1053.60" cy="356.59" r="2.9" fill="#fff" stroke="#0f52b8" stroke-width="1.4"/><circle cx="1088.90" cy="371.49" r="2.9" fill="#fff" stroke="#0f52b8" stroke-width="1.4"/><circle cx="1124.20" cy="383.01" r="2.9" fill="#fff" stroke="#0f52b8" stroke-width="1.4"/><circle cx="1159.50" cy="379.53" r="2.9" fill="#fff" stroke="#0f52b8" stroke-width="1.4"/><circle cx="1159.50" cy="437.32" r="2.8" fill="#fff" stroke="#333" stroke-width="1.2"/><rect x="940.5" y="388" width="206" height="51" rx="4" fill="#888" opacity="0.5"/><rect x="939.5" y="387" width="206" height="51" rx="4" fill="#fff" stroke="#333" stroke-width="1.2"/><text x="949" y="408" font-size="12" font-weight="bold" fill="#111" font-family="Liberation Sans, sans-serif" letter-spacing="-0.2">2021년 9월 17일 22:00 노출 수 614</text><text x="949" y="423" font-size="12" font-weight="bold" fill="#111" font-family="Liberation Sans, sans-serif" letter-spacing="-0.2">2021년 9월 16일 22:00 노출 수 32</text><line x1="325" y1="694.10" x2="1168" y2="694.10" stroke="#dedede" stroke-width="1" stroke-dasharray="3 2"/><line x1="325" y1="743.90" x2="1168" y2="743.90" stroke="#dedede" stroke-width="1" stroke-dasharray="3 2"/><line x1="325" y1="793.70" x2="1168" y2="793.70" stroke="#dedede" stroke-width="1" stroke-dasharray="3 2"/><line x1="325" y1="843.5" x2="1168" y2="843.5" stroke="#d3dae6" stroke-width="1.2"/><text x="311" y="699.70" text-anchor="end" font-size="10" fill="#222" font-family="Liberation Sans, sans-serif">36</text><text x="311" y="749.50" text-anchor="end" font-size="10" fill="#222" font-family="Liberation Sans, sans-serif">24</text><text x="311" y="799.30" text-anchor="end" font-size="10" fill="#222" font-family="Liberation Sans, sans-serif">12</text><text x="311" y="849.10" text-anchor="end" font-size="10" fill="#222" font-family="Liberation Sans, sans-serif">0</text><line x1="332.90" y1="844.5" x2="332.90" y2="851.5" stroke="#c9d6ee" stroke-width="1"/><text x="332.90" y="860.5" text-anchor="middle" font-size="11" fill="#222" font-family="Liberation Sans, sans-serif" letter-spacing="-1">9월10일</text><line x1="470.70" y1="844.5" x2="470.70" y2="851.5" stroke="#c9d6ee" stroke-width="1"/><text x="470.70" y="860.5" text-anchor="middle" font-size="11" fill="#222" font-family="Liberation Sans, sans-serif" letter-spacing="-1">9월11일</text><line x1="608.50" y1="844.5" x2="608.50" y2="851.5" stroke="#c9d6ee" stroke-width="1"/><text x="608.50" y="860.5" text-anchor="middle" font-size="11" fill="#222" font-family="Liberation Sans, sans-serif" letter-spacing="-1">9월12일</text><line x1="746.30" y1="844.5" x2="746.30" y2="851.5" stroke="#c9d6ee" stroke-width="1"/><text x="746.30" y="860.5" text-anchor="middle" font-size="11" fill="#222" font-family="Liberation Sans, sans-serif" letter-spacing="-1">9월13일</text><line x1="884.10" y1="844.5" x2="884.10" y2="851.5" stroke="#c9d6ee" stroke-width="1"/><text x="884.10" y="860.5" text-anchor="middle" font-size="11" fill="#222" font-family="Liberation Sans, sans-serif" letter-spacing="-1">9월14일</text><line x1="1021.90" y1="844.5" x2="1021.90" y2="851.5" stroke="#c9d6ee" stroke-width="1"/><text x="1021.90" y="860.5" text-anchor="middle" font-size="11" fill="#222" font-family="Liberation Sans, sans-serif" letter-spacing="-1">9월15일</text><line x1="1159.70" y1="844.5" x2="1159.70" y2="851.5" stroke="#c9d6ee" stroke-width="1"/><text x="1159.70" y="860.5" text-anchor="middle" font-size="11" fill="#222" font-family="Liberation Sans, sans-serif" letter-spacing="-1">9월16일</text><polyline points="332.90,706.55 470.70,706.55 608.50,706.55 746.30,706.55 884.10,702.40 1021.90,702.40 1159.70,702.40" fill="none" stroke="#2a63c6" stroke-width="1.4"/><circle cx="332.90" cy="706.55" r="2.8" fill="#fff" stroke="#1a56bb" stroke-width="1.3"/><circle cx="470.70" cy="706.55" r="2.8" fill="#fff" stroke="#1a56bb" stroke-width="1.3"/><circle cx="608.50" cy="706.55" r="2.8" fill="#fff" stroke="#1a56bb" stroke-width="1.3"/><circle cx="746.30" cy="706.55" r="2.8" fill="#fff" stroke="#1a56bb" stroke-width="1.3"/><circle cx="884.10" cy="702.40" r="2.8" fill="#fff" stroke="#1a56bb" stroke-width="1.3"/><circle cx="1021.90" cy="702.40" r="2.8" fill="#fff" stroke="#1a56bb" stroke-width="1.3"/><circle cx="1159.70" cy="702.40" r="2.8" fill="#fff" stroke="#1a56bb" stroke-width="1.3"/></svg>

</body></html>
